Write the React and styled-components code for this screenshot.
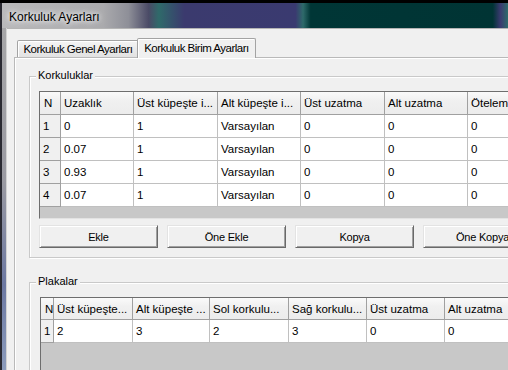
import React from 'react';
import styled, { createGlobalStyle } from 'styled-components';

const GlobalStyle = createGlobalStyle`
  html, body {
    margin: 0;
    padding: 0;
    background: #000;
  }
  body {
    font-family: "Liberation Sans", Arial, sans-serif;
    color: #000;
  }
`;

const Screen = styled.div`
  width: 508px;
  height: 370px;
  box-sizing: border-box;
  padding-top: 3px;
  background: #000;
  overflow: hidden;
  display: flex;
  flex-direction: column;
`;

const Window = styled.div`
  flex: 1;
  min-height: 0;
  display: flex;
  flex-direction: column;
  border-left: 2px solid #2a2a32;
`;

const TitleBar = styled.div`
  height: 25px;
  flex: none;
  display: flex;
  align-items: center;
  box-sizing: border-box;
  padding: 3px 0 0 7px;
  font-size: 12px;
  text-shadow: 0 0 5px #fff, 0 0 9px #fff;
  background: linear-gradient(
    90deg,
    #b9b9bb 0%,
    #aaaaad 20%,
    #8e8f98 25%,
    #4a4a66 29%,
    #2f6a6a 31%,
    #3b3a6e 36%,
    #3a3a70 58%,
    #2e6a6a 59.5%,
    #003636 61%,
    #003434 97%,
    #3a3a70 98.5%,
    #2e6b6b 100%
  );
`;

const Body = styled.div`
  flex: 1;
  min-height: 0;
  display: flex;
`;

const SideFrame = styled.div`
  width: 4px;
  flex: none;
  border-right: 1px solid #d2d2d2;
  background: linear-gradient(180deg, #a6a6a8 0%, #9a9aa2 45%, #6c78a2 75%, #8c9cbc 100%);
`;

const Client = styled.div`
  flex: 1;
  min-width: 0;
  background: #f0f0f0;
  border-top: 1px solid #b4b4b4;
  padding: 9px 0 0 7px;
  display: flex;
  flex-direction: column;
  overflow: hidden;
`;

const TabControl = styled.div`
  width: 640px;
  flex: 1;
  display: flex;
  flex-direction: column;
`;

const TabStrip = styled.div`
  height: 19px;
  flex: none;
  display: flex;
  align-items: flex-end;
  padding-left: 3px;
`;

const Tab = styled.div`
  box-sizing: border-box;
  position: relative;
  display: flex;
  align-items: center;
  justify-content: center;
  font-size: 11.5px;
  letter-spacing: -0.5px;
  white-space: nowrap;
  border: 1px solid #a3a3a3;
  border-bottom: none;
  border-radius: 2px 2px 0 0;
  width: ${p => (p.$active ? 119 : 122)}px;
  height: ${p => (p.$active ? 20 : 17)}px;
  margin-left: ${p => (p.$active ? -2 : 0)}px;
  margin-bottom: ${p => (p.$active ? -1 : 0)}px;
  padding-bottom: ${p => (p.$active ? 2 : 0)}px;
  z-index: ${p => (p.$active ? 1 : 0)};
  background: ${p => (p.$active ? '#f0f0f0' : 'linear-gradient(180deg, #f4f4f4 0%, #ebebeb 50%, #e2e2e2 100%)')};
  box-shadow: inset 1px 1px 0 #fff;
`;

const TabPanel = styled.div`
  flex: 1;
  border: 1px solid #b9b9b9;
  box-shadow: inset 1px 1px 0 #fff;
  padding: 18px 0 0 14px;
  display: flex;
  flex-direction: column;
  gap: 24px;
`;

const GroupBox = styled.div`
  position: relative;
  border: 1px solid #c9c9c9;
  box-shadow: inset 1px 1px 0 #fff, 1px 1px 0 #fff;
  padding: 14px 0 ${p => p.$bottom}px ${p => p.$inset}px;
  display: flex;
  flex-direction: column;
  gap: 6px;
`;

const Legend = styled.span`
  position: absolute;
  top: -8px;
  left: 6px;
  padding: 0 2px;
  background: #f0f0f0;
  font-size: 11px;
  line-height: 13px;
`;

const GridFrame = styled.div`
  height: ${p => p.$height}px;
  box-sizing: border-box;
  border-style: solid;
  border-width: 1px;
  border-color: #6e6e6e #e3e3e3 #e3e3e3 #6e6e6e;
  background: #c8c8c8;
  overflow: hidden;
`;

const Grid = styled.div`
  display: grid;
  grid-template-columns: ${p => p.$cols};
  align-content: start;
`;

const Cell = styled.div`
  box-sizing: border-box;
  height: 23px;
  display: flex;
  align-items: center;
  padding: 0 3px;
  font-size: 11.5px;
  white-space: nowrap;
  overflow: hidden;
  background: #fff;
  border-right: 1px solid #c0c0c0;
  border-bottom: 1px solid #c0c0c0;
`;

const HeaderCell = styled(Cell)`
  height: ${p => p.$h}px;
  background: linear-gradient(180deg, #fafafa 0%, #f0f0f0 40%, #ececec 100%);
  border-right-color: #a0a0a0;
  border-bottom-color: #a0a0a0;
  padding-left: ${p => (p.$corner ? 4 : 3)}px;
`;

const RowHeadCell = styled(Cell)`
  background: #f0f0f0;
  border-right-color: #a0a0a0;
  border-bottom-color: #a0a0a0;
  padding-left: 3px;
`;

const ButtonRow = styled.div`
  display: flex;
  gap: 9px;
`;

const Button = styled.div`
  flex: none;
  box-sizing: border-box;
  width: 119px;
  height: 23px;
  display: flex;
  align-items: center;
  justify-content: center;
  font-size: 11px;
  letter-spacing: -0.2px;
  white-space: nowrap;
  background: #f0f0f0;
  border: 1px solid;
  border-color: #e3e3e3 #696969 #696969 #e3e3e3;
  box-shadow: inset 1px 1px 0 #fff, inset -1px -1px 0 #a0a0a0;
`;

const korkuluklar = {
  cols: '21px 73px 84px 83px 84px 83px 90px',
  head: ['N', 'Uzaklık', 'Üst küpeşte i...', 'Alt küpeşte i...', 'Üst uzatma', 'Alt uzatma', 'Öteleme'],
  rows: [
    ['1', '0', '1', 'Varsayılan', '0', '0', '0'],
    ['2', '0.07', '1', 'Varsayılan', '0', '0', '0'],
    ['3', '0.93', '1', 'Varsayılan', '0', '0', '0'],
    ['4', '0.07', '1', 'Varsayılan', '0', '0', '0'],
  ],
};

const plakalar = {
  cols: '13px 79px 77px 79px 78px 78px 78px',
  head: ['N', 'Üst küpeşte...', 'Alt küpeşte ...', 'Sol korkulu...', 'Sağ korkulu...', 'Üst uzatma', 'Alt uzatma'],
  rows: [['1', '2', '3', '2', '3', '0', '0']],
};

function DataGrid({ data, height, headHeight }) {
  return (
    <GridFrame $height={height}>
      <Grid $cols={data.cols}>
        {data.head.map((h, i) => (
          <HeaderCell key={'h' + i} $h={headHeight} $corner={i === 0}>
            {h}
          </HeaderCell>
        ))}
        {data.rows.map((row, r) =>
          row.map((v, i) =>
            i === 0 ? (
              <RowHeadCell key={r + '-' + i}>{v}</RowHeadCell>
            ) : (
              <Cell key={r + '-' + i}>{v}</Cell>
            )
          )
        )}
      </Grid>
    </GridFrame>
  );
}

export default function App() {
  return (
    <>
      <GlobalStyle />
      <Screen>
        <Window>
          <TitleBar>Korkuluk Ayarları</TitleBar>
          <Body>
            <SideFrame />
            <Client>
              <TabControl>
                <TabStrip>
                  <Tab>Korkuluk Genel Ayarları</Tab>
                  <Tab $active>Korkuluk Birim Ayarları</Tab>
                </TabStrip>
                <TabPanel>
                  <GroupBox $inset={9} $bottom={9}>
                    <Legend>Korkuluklar</Legend>
                    <DataGrid data={korkuluklar} height={128} headHeight={23} />
                    <ButtonRow>
                      <Button>Ekle</Button>
                      <Button>Öne Ekle</Button>
                      <Button>Kopya</Button>
                      <Button>Öne Kopya</Button>
                    </ButtonRow>
                  </GroupBox>
                  <GroupBox $inset={10} $bottom={0}>
                    <Legend>Plakalar</Legend>
                    <DataGrid data={plakalar} height={110} headHeight={22} />
                  </GroupBox>
                </TabPanel>
              </TabControl>
            </Client>
          </Body>
        </Window>
      </Screen>
    </>
  );
}
